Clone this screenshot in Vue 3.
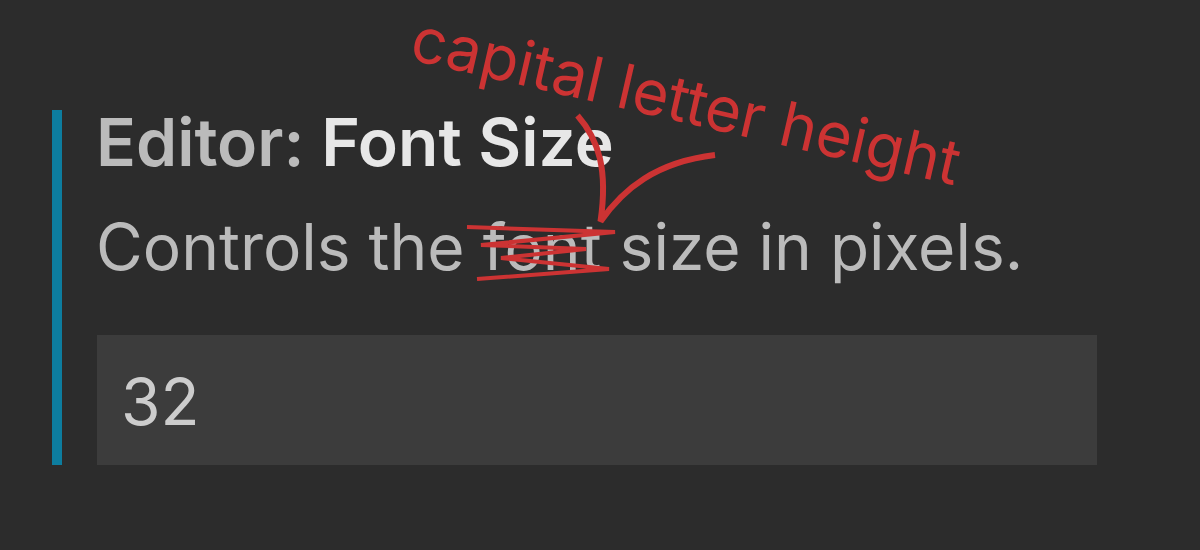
<script setup>
import { ref } from 'vue'

const fontSize = ref('32')
</script>

<template>
  <main class="page">
    <section class="setting">
      <label class="title" for="font-size">
        <span class="category">Editor: </span>Font Size
      </label>
      <p id="font-size-help" class="description">Controls the font size in pixels.</p>
      <input
        id="font-size"
        v-model="fontSize"
        class="field"
        type="text"
        inputmode="numeric"
        aria-describedby="font-size-help"
      />
      <svg class="markup" width="1200" height="550" viewBox="0 0 1200 550">
        <text class="note" transform="translate(408 59) rotate(13)">capital letter height</text>
        <path class="caret" d="M577.500 115.500C599 140 608 170 600.500 221.500C623 189 656 162 715 155" />
        <path class="scribble" d="M467 227L615 232L481 245L586 249L501 258L609 269L477 279" />
      </svg>
    </section>
  </main>
</template>

<style>
body {
  margin: 0;
  background: #2c2c2c;
}
</style>

<style scoped>
.page {
  box-sizing: border-box;
  min-height: 100vh;
  padding: 110px 103px 85px 52px;
  border-bottom: 2px solid #2f272b;
  background: #2c2c2c;
  color: #bbbbbb;
  font-family: Inter, "Liberation Sans", sans-serif;
  font-size: 64px;
  line-height: 64px;
}

.setting {
  position: relative;
  display: flex;
  flex-direction: column;
  padding-left: 35px;
  border-left: 10px solid #0d7d9f;
}

.title {
  margin-left: -1px;
  color: #e7e7e7;
  font-size: 66px;
  font-weight: 600;
}

.category {
  color: #bbbbbb;
}

.description {
  margin: 41px 0 56px -1px;
}

.field {
  box-sizing: border-box;
  width: 100%;
  height: 130px;
  padding: 2px 24px 0;
  border: 0;
  border-radius: 0;
  outline: 0;
  background: #3c3c3c;
  color: #cccccc;
  font: inherit;
}

.markup {
  position: absolute;
  top: -110px;
  left: -62px;
  overflow: visible;
  pointer-events: none;
}

.note {
  fill: #cc3333;
  font-size: 62px;
}

.caret,
.scribble {
  fill: none;
  stroke: #cc3333;
  stroke-width: 6;
  stroke-linejoin: bevel;
}

.scribble {
  stroke-width: 4;
  stroke-linejoin: miter;
  stroke-miterlimit: 1;
}
</style>
